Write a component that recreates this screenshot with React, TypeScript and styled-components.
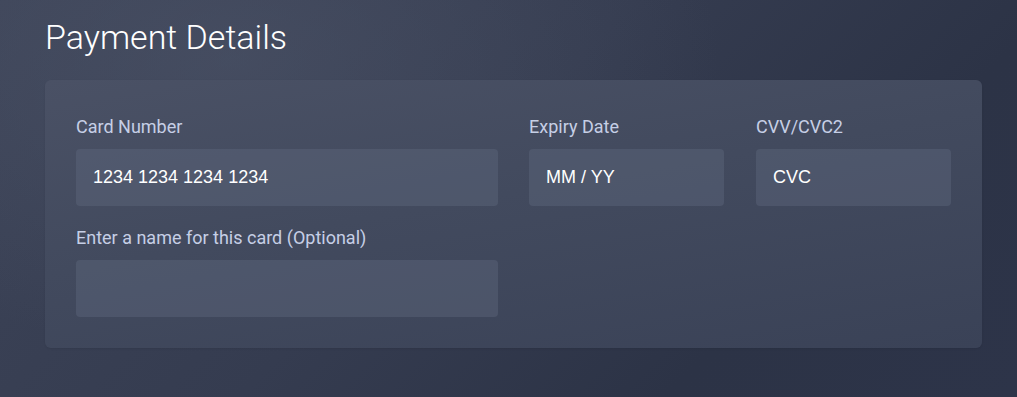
import React from "react";
import styled, { createGlobalStyle } from "styled-components";

const Global = createGlobalStyle`
  html, body { margin: 0; padding: 0; }
  body {
    width: 1017px;
    height: 397px;
    overflow: hidden;
    font-family: Roboto, "Liberation Sans", sans-serif;
  }
`;

const Page = styled.div`
  box-sizing: border-box;
  width: 1017px;
  height: 397px;
  padding: 15px 36px 0 45px;
  background:
    radial-gradient(ellipse 700px 420px at 230px 60px, rgba(80, 88, 108, 0.5), rgba(80, 88, 108, 0) 70%),
    linear-gradient(135deg, #3d4458 0%, #353c50 45%, #2c3346 75%, #2d3449 100%);
`;

const Title = styled.h1`
  margin: 0 0 20px 0;
  font-family: Roboto, sans-serif;
  font-weight: 300;
  font-size: 34px;
  line-height: 45px;
  color: #ffffff;
`;

const Card = styled.div`
  box-sizing: border-box;
  width: 937px;
  height: 268px;
  padding: 36px 31px 0 31px;
  border-radius: 6px;
  background: linear-gradient(170deg, #4a5165 0%, #424a5e 45%, #3a4257 100%);
  box-shadow: 0 1px 2px rgba(0, 0, 0, 0.08);
`;

const Row = styled.div`
  display: flex;
  margin-bottom: 21px;
`;

const Field = styled.div<{ $w: number; $ml?: number }>`
  display: flex;
  flex-direction: column;
  width: ${(p) => p.$w}px;
  margin-left: ${(p) => p.$ml ?? 0}px;
`;

const Label = styled.label`
  font-family: Roboto, sans-serif;
  font-size: 18px;
  line-height: 22px;
  color: #c6cfe6;
  margin-bottom: 11px;
  white-space: nowrap;
`;

const Input = styled.div`
  box-sizing: border-box;
  height: 57px;
  border-radius: 4px;
  background: rgba(95, 104, 126, 0.42);
  padding: 0 17px;
  display: flex;
  align-items: center;
  font-family: "Liberation Sans", Arial, sans-serif;
  font-size: 18px;
  color: #ffffff;
`;

export default function App() {
  return (
    <>
      <Global />
      <Page>
        <Title>Payment Details</Title>
        <Card>
          <Row>
            <Field $w={422}>
              <Label>Card Number</Label>
              <Input>1234 1234 1234 1234</Input>
            </Field>
            <Field $w={195} $ml={31}>
              <Label>Expiry Date</Label>
              <Input>MM / YY</Input>
            </Field>
            <Field $w={195} $ml={32}>
              <Label>CVV/CVC2</Label>
              <Input>CVC</Input>
            </Field>
          </Row>
          <Row>
            <Field $w={422}>
              <Label>Enter a name for this card (Optional)</Label>
              <Input />
            </Field>
          </Row>
        </Card>
      </Page>
    </>
  );
}
